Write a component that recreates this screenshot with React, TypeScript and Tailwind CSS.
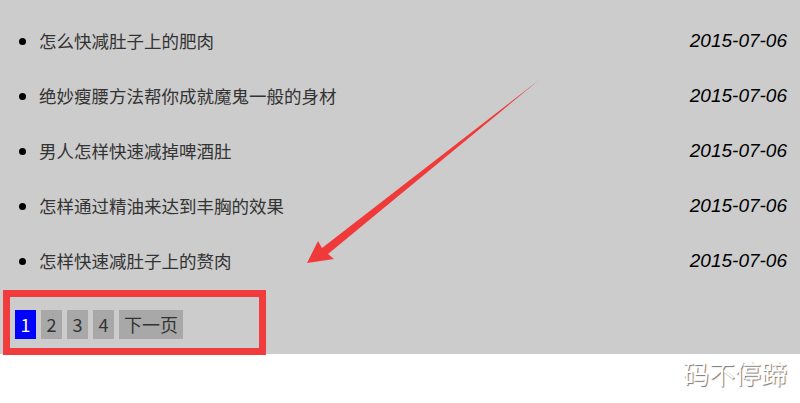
import React from "react"

const articles = [
  { title: "怎么快减肚子上的肥肉", date: "2015-07-06" },
  { title: "绝妙瘦腰方法帮你成就魔鬼一般的身材", date: "2015-07-06" },
  { title: "男人怎样快速减掉啤酒肚", date: "2015-07-06" },
  { title: "怎样通过精油来达到丰胸的效果", date: "2015-07-06" },
  { title: "怎样快速减肚子上的赘肉", date: "2015-07-06" },
]

const pages = ["1", "2", "3", "4", "下一页"]

function Arrow() {
  // red annotation arrow drawn over the list
  return (
    <svg
      className="absolute inset-0 pointer-events-none"
      width="800"
      height="403"
      viewBox="0 0 800 403"
    >
      <path
        d="M307 263 L318 241 L322 248 L539 80 L328 254 L334 259 Z"
        fill="#f03a3a"
      />
    </svg>
  )
}

export default function App() {
  return (
    <div className="relative w-[800px] h-[403px] bg-white font-['Noto_Sans_CJK_SC','Noto_Sans',sans-serif]">
      <div className="bg-[#cccccc] h-[354px] pt-[13px]">
        <ul className="list-disc pl-[39px] pr-[13px] text-[17.5px] text-[#333] marker:text-black">
          {articles.map((a) => (
            <li key={a.title} className="h-[55px] leading-[55px]">
              <div className="flex justify-between items-center h-full">
                <span>{a.title}</span>
                <span className="italic text-black text-[19px] font-['Liberation_Sans',sans-serif]">
                  {a.date}
                </span>
              </div>
            </li>
          ))}
        </ul>
        <div className="ml-[3px] mt-[2px] w-[263px] h-[65px] border-[7px] border-[#f03c3c] pl-[5px] pt-[13px]">
          <div className="flex gap-[5px]">
            {pages.map((p, i) => (
              <span
                key={p}
                className={
                  i === 0
                    ? "min-w-[21px] text-center px-[5px] h-[29px] leading-[29px] text-[18px] bg-[#0000ff] text-white"
                    : "min-w-[21px] text-center px-[5px] h-[29px] leading-[29px] text-[18px] bg-[#a8a8a8] text-[#333]"
                }
              >
                {p}
              </span>
            ))}
          </div>
        </div>
      </div>
      <div className="flex justify-end pr-[13px] pt-[4px]">
        <span className="text-[26px] leading-[30px] text-white [text-shadow:1px_1px_1px_#777]">
          码不停蹄
        </span>
      </div>
      <Arrow />
    </div>
  )
}
